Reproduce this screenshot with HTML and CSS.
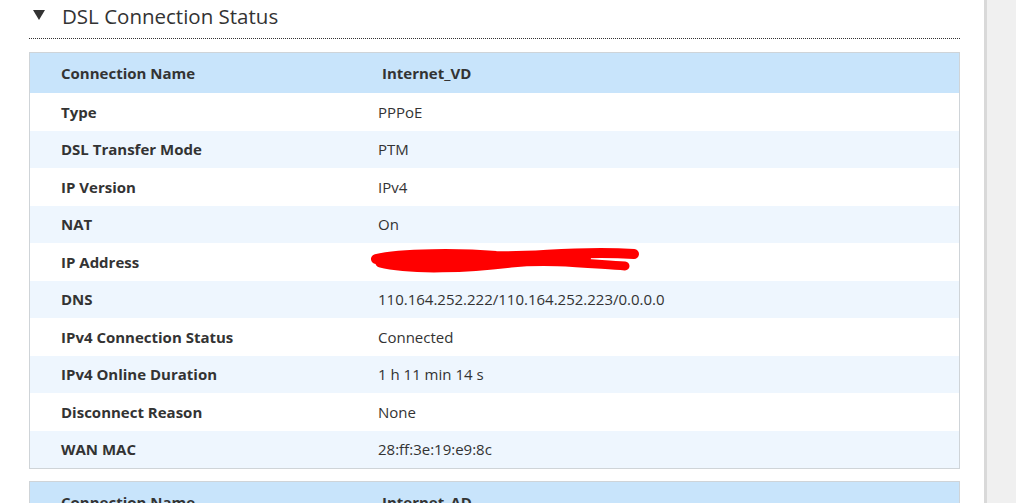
FILE: index.html
```html
<!DOCTYPE html>
<html>
<head>
<meta charset="utf-8">
<link rel="stylesheet" href="styles.css">
</head>
<body>
<div class="page">
  <main class="content">
    <div class="section-title">
      <span class="caret"></span>
      <h2>DSL Connection Status</h2>
    </div>
    <div class="status-table">
      <div class="row head"><div class="label">Connection Name</div><div class="value">Internet_VD</div></div>
      <div class="row"><div class="label">Type</div><div class="value">PPPoE</div></div>
      <div class="row alt"><div class="label">DSL Transfer Mode</div><div class="value">PTM</div></div>
      <div class="row"><div class="label">IP Version</div><div class="value">IPv4</div></div>
      <div class="row alt"><div class="label">NAT</div><div class="value">On</div></div>
      <div class="row"><div class="label">IP Address</div><div class="value"><span class="redact"><svg width="272" height="30" viewBox="0 0 272 30"><path d="M5 12 C 30 6, 90 6, 125 9 C 165 11, 200 3, 263 7" stroke="#f00" stroke-width="10" fill="none" stroke-linecap="round"/><path d="M9 16 C 40 24, 100 21, 140 16 C 180 12, 220 17, 254 19" stroke="#f00" stroke-width="9" fill="none" stroke-linecap="round"/><path d="M10 14 C 60 16, 120 13, 215 11" stroke="#f00" stroke-width="10" fill="none" stroke-linecap="round"/></svg></span></div></div>
      <div class="row alt"><div class="label">DNS</div><div class="value">110.164.252.222/110.164.252.223/0.0.0.0</div></div>
      <div class="row"><div class="label">IPv4 Connection Status</div><div class="value">Connected</div></div>
      <div class="row alt"><div class="label">IPv4 Online Duration</div><div class="value">1 h 11 min 14 s</div></div>
      <div class="row"><div class="label">Disconnect Reason</div><div class="value">None</div></div>
      <div class="row alt"><div class="label">WAN MAC</div><div class="value">28:ff:3e:19:e9:8c</div></div>
    </div>
    <div class="status-table">
      <div class="row head"><div class="label">Connection Name</div><div class="value">Internet_AD</div></div>
      <div class="row"><div class="label">Type</div><div class="value">PPPoE</div></div>
    </div>
  </main>
  <aside class="scroll-rail"></aside>
</div>
</body>
</html>
```
FILE: styles.css
```css
html, body {
  margin: 0;
  padding: 0;
  height: 503px;
  overflow: hidden;
  background: #fff;
  font-family: "Open Sans", "Noto Sans", sans-serif;
  color: #333;
}
.page {
  display: flex;
  height: 503px;
}
.content {
  flex: 1;
  padding: 0 24px 0 29px;
}
.scroll-rail {
  width: 29px;
  background: #f0f0f0;
  border-left: 3px solid #d9d9d9;
}
.section-title {
  display: flex;
  align-items: center;
  height: 38px;
  border-bottom: 1px dotted #333;
  margin-bottom: 13px;
}
.caret {
  width: 0;
  height: 0;
  border-left: 6px solid transparent;
  border-right: 6px solid transparent;
  border-top: 10px solid #333;
  margin: 0 17px 8px 4px;
}
.section-title h2 {
  margin: 0 0 7px;
  font-size: 20.5px;
  font-weight: 400;
  color: #333;
}
.status-table {
  border: 1px solid #cfd4d8;
  margin-bottom: 12px;
}
.row {
  display: grid;
  grid-template-columns: 348px 1fr;
  height: 37.5px;
  align-items: center;
  font-size: 15px;
  background: #fff;
}
.row.alt {
  background: #eef6fe;
}
.row.head {
  height: 40px;
  background: #c8e4fb;
  font-weight: 700;
}
.row.head .value {
  padding-left: 4px;
}
.label {
  padding-left: 31px;
  font-weight: 700;
}
.value {
  white-space: nowrap;
}
.redact {
  display: inline-block;
  vertical-align: middle;
  margin-left: -7px;
  height: 30px;
}
```
